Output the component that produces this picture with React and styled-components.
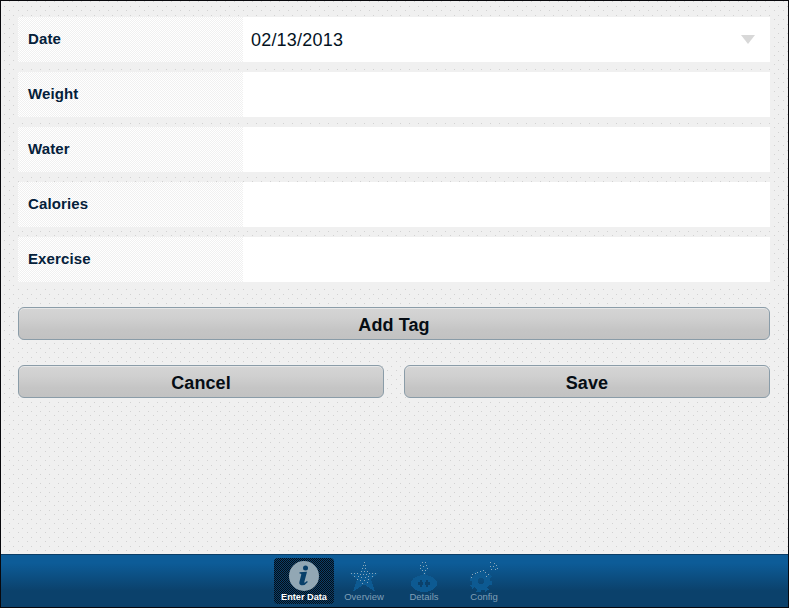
import React from "react";
import styled, { createGlobalStyle } from "styled-components";

const Global = createGlobalStyle`
  * { box-sizing: border-box; }
  body { margin: 0; font-family: "Liberation Sans", Arial, sans-serif; }
`;

const Screen = styled.main`
  width: 789px;
  height: 608px;
  border: 1px solid #08080c;
  display: flex;
  flex-direction: column;
  background-color: #f0f0f0;
  background-image: conic-gradient(at 1px 1px, transparent 75%, #d2d2d2 0),
    conic-gradient(at 1px 1px, transparent 75%, #d2d2d2 0);
  background-size: 9px 9px;
  background-position: 3px 5px, 8px 9px;
`;

const Form = styled.form`
  flex: 1;
  padding: 16px 18px 0 17px;
  display: flex;
  flex-direction: column;
`;

const Fields = styled.div`
  display: grid;
  grid-auto-rows: 45px;
  gap: 10px;
  margin-bottom: 25px;
`;

const Field = styled.label`
  display: grid;
  grid-template-columns: 225px 1fr;
  background: #fff;
  box-shadow: 0 4px #f0f0f0;
`;

const FieldLabel = styled.span`
  padding: 13px 0 0 10px;
  font-size: 15px;
  line-height: 17px;
  letter-spacing: 0.12px;
  font-weight: bold;
  color: #04203a;
  background: repeating-conic-gradient(#fff 0 25%, #f0f0f0 0 50%) 0 0 / 2px 2px;
`;

const FieldValue = styled.span`
  display: flex;
  align-items: center;
  justify-content: space-between;
  padding: 1px 15px 0 8px;
  font-size: 18px;
  letter-spacing: 0.2px;
  color: #04131f;
`;

const Arrow = styled.svg`
  width: 14px;
  height: 9px;
  margin-bottom: 2px;
  fill: #d8d8d8;
`;

const Actions = styled.div`
  display: grid;
  grid-template-columns: repeat(${(p) => p.$columns}, 1fr);
  gap: 20px;
  margin-bottom: 25px;
`;

const Button = styled.button`
  height: 33px;
  padding: 3px 0 0;
  border: 1px solid #8a9ca8;
  border-radius: 6px;
  box-shadow: inset 0 1px #e6e6e6;
  background: linear-gradient(#d5d5d5, #cfcfcf 35%, #c5c5c5 70%, #c2c2c2);
  font: bold 18px "Liberation Sans", Arial, sans-serif;
  letter-spacing: 0.1px;
  color: #060d14;
`;

const TabBar = styled.nav`
  height: 53px;
  padding-top: 3px;
  border-top: 1px solid #0b3d66;
  display: flex;
  justify-content: center;
  padding-right: 1px;
  background: linear-gradient(#0d5c98 0, #0d5c98 8px, #0b416b 36px, #0b416b);
`;

const Tab = styled.a`
  width: 60px;
  height: 46px;
  border-radius: 4px;
  display: flex;
  flex-direction: column;
  align-items: center;
  font-size: ${(p) => (p.$active ? "9.2px" : "9.5px")};
  line-height: 10px;
  white-space: nowrap;
  font-weight: ${(p) => (p.$active ? "bold" : "normal")};
  color: ${(p) => (p.$active ? "#fff" : "#7f9fb7")};
  background: ${(p) => (p.$active
    ? "repeating-conic-gradient(#0b3f69 0 25%, #050d16 0 50%) 0 0 / 2px 2px"
    : "none")};
`;

const TabIcon = styled.svg`
  width: 36px;
  height: 34px;
  flex: none;
  fill: #0d5a92;
`;

const InfoIcon = () => (
  <TabIcon viewBox="0 0 36 34">
    <circle cx="18" cy="18" r="15" fill="#92a7b4" />
    <circle cx="19.5" cy="10" r="2.5" fill="#083f69" />
    <path fill="#083f69" d="M13.5 14.3l7.5-.6-2.7 10.4q-.3 1.5 2.7-1l.8.8q-3.2 4-6.5 3.3-2.6-.6-1.8-3.8l1.8-7q.2-1-1.8-1z" />
  </TabIcon>
);

const Dots = ({ points }) => points.map(([x, y]) => (
  <rect key={`${x}-${y}`} x={x} y={y} width="1" height="1" fill="#8aa7bc" />
));

const StarIcon = () => (
  <TabIcon viewBox="0 0 36 34" shapeRendering="crispEdges">
    <path d="M18 4l4 10.500 11 0-8 7 4 12-11-7-11 7 4-12-8-7 11 0z" />
    <Dots points={[[18,4],[17,7],[19,7],[16,10],[19,10],[15,13],[18,13],[21,13],[5,15],[8,15],[11,15],[14,16],[17,16],[20,16],[23,15],[26,15],[29,15],[8,18],[12,18],[15,19],[19,19],[22,18],[26,18],[11,21],[14,22],[18,22],[22,21],[16,25],[21,24]]} />
  </TabIcon>
);

const DetailsIcon = () => (
  <TabIcon viewBox="0 0 36 34" shapeRendering="crispEdges">
    <circle cx="18" cy="9" r="4.5" />
    <path d="M17 11h3v9h-3z" />
    <ellipse cx="18" cy="25.5" rx="13" ry="8.5" />
    <path fill="#0b416b" d="M12 24h2v-2h2v2h1v3h-1v2h-2v-2h-2zM19 24h1v-2h2v2h2v3h-2v2h-2v-2h-1z" />
    <Dots points={[[16,4],[19,4],[14,7],[17,8],[20,7],[14,10],[21,10],[16,12],[19,12],[18,15]]} />
  </TabIcon>
);

const ConfigIcon = () => (
  <TabIcon viewBox="0 0 36 34" shapeRendering="crispEdges">
    <circle cx="15" cy="23" r="6" fill="none" stroke="#0d5a92" strokeWidth="6" />
    <circle cx="15" cy="23" r="10" fill="none" stroke="#0d5a92" strokeWidth="3" strokeDasharray="4 3.854" />
    <circle cx="28" cy="8" r="3" fill="none" stroke="#0d5a92" strokeWidth="3" />
    <Dots points={[[24,4],[28,5],[30,7],[24,8],[27,8],[31,10],[25,11],[29,11],[14,13],[17,12],[11,14],[19,14],[6,16],[9,15],[22,16],[5,19],[20,18]]} />
  </TabIcon>
);

const fields = [
  ["Date", "02/13/2013"],
  ["Weight"],
  ["Water"],
  ["Calories"],
  ["Exercise"],
];

export default function App() {
  return (
    <>
      <Global />
      <Screen>
        <Form>
          <Fields>
            {fields.map(([name, value]) => (
              <Field key={name}>
                <FieldLabel>{name}</FieldLabel>
                <FieldValue>
                  {value}
                  {value && <Arrow viewBox="0 0 14 9"><path d="M0 0h14L7 9z" /></Arrow>}
                </FieldValue>
              </Field>
            ))}
          </Fields>
          <Actions $columns={1}>
            <Button type="button">Add Tag</Button>
          </Actions>
          <Actions $columns={2}>
            <Button type="button">Cancel</Button>
            <Button type="button">Save</Button>
          </Actions>
        </Form>
        <TabBar>
          <Tab $active><InfoIcon />Enter Data</Tab>
          <Tab><StarIcon />Overview</Tab>
          <Tab><DetailsIcon />Details</Tab>
          <Tab><ConfigIcon />Config</Tab>
        </TabBar>
      </Screen>
    </>
  );
}
